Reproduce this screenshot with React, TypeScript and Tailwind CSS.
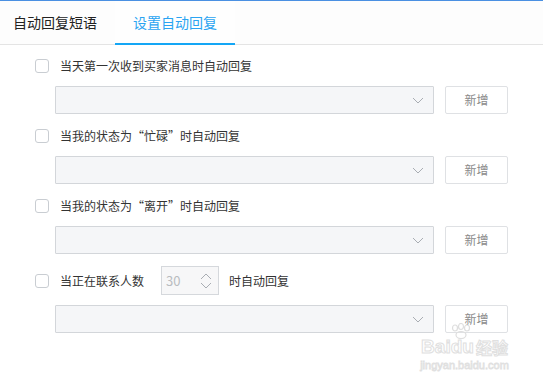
import React from "react";

const font = { fontFamily: '"Noto Sans CJK SC", "Noto Sans", sans-serif' };

function Checkbox() {
  return <div className="h-[14px] w-[14px] shrink-0 rounded-[3px] border border-[#c9cdd2] bg-white" />;
}

function Chevron() {
  return (
    <svg width="12" height="7" viewBox="0 0 12 7" className="shrink-0">
      <path d="M1 1 L6 6 L11 1" fill="none" stroke="#a9adb3" strokeWidth="1" />
    </svg>
  );
}

function SelectRow() {
  return (
    <div className="ml-[20px] mt-[10px] flex items-center">
      <div className="flex h-[28px] w-[379px] shrink-0 items-center justify-end rounded-[1px] border border-[#d3d6da] bg-[#f5f6f8] pr-[9px]">
        <Chevron />
      </div>
      <div className="ml-[11px] flex h-[28px] w-[63px] shrink-0 items-center justify-center rounded-[2px] border border-[#dfe1e4] bg-white text-[12px] text-[#8a8a8a]">
        新增
      </div>
    </div>
  );
}

function Block({ label }: { label: string }) {
  return (
    <div className="mb-[12px]">
      <div className="flex h-[20px] items-center">
        <Checkbox />
        <span className="ml-[11px] text-[12px] text-[#333]">{label}</span>
      </div>
      <SelectRow />
    </div>
  );
}

const stroke = (w: string) => ({ color: "transparent", WebkitTextStroke: `${w} #e0e0e0` });

export default function App() {
  return (
    <div className="relative h-[380px] w-[543px] overflow-hidden bg-white" style={font}>
      <div className="h-[1px] bg-[#4a90e2]" />
      <div className="flex h-[44px] border-b border-[#e4e4e4] bg-[#fdfdfd]">
        <div className="flex w-[115px] items-center pl-[13px] text-[14px] text-[#222]">自动回复短语</div>
        <div className="mb-[-1px] flex w-[120px] items-center justify-center border-b-2 border-[#14a6f5] bg-[#fefefe] text-[14px] text-[#2aa4f2]">
          设置自动回复
        </div>
      </div>
      <div className="pl-[35px] pt-[11px]">
        <Block label="当天第一次收到买家消息时自动回复" />
        <Block label="当我的状态为“忙碌”时自动回复" />
        <Block label="当我的状态为“离开”时自动回复" />
        <div>
          <div className="flex h-[29px] items-center">
            <Checkbox />
            <span className="ml-[11px] text-[12px] text-[#333]">当正在联系人数</span>
            <div className="ml-[17px] flex h-[29px] w-[58px] items-center justify-between border border-[#d5d8dc] bg-[#f7f7f8] pl-[4px] pr-[6px]">
              <span className="text-[13px] text-[#b9bcc0]">30</span>
              <svg width="12" height="18" viewBox="0 0 12 18">
                <path d="M1 7 L6 2 L11 7" fill="none" stroke="#a9adb3" strokeWidth="1" />
                <path d="M1 11 L6 16 L11 11" fill="none" stroke="#a9adb3" strokeWidth="1" />
              </svg>
            </div>
            <span className="ml-[10px] text-[12px] text-[#333]">时自动回复</span>
          </div>
          <div className="mt-[2px]">
            <SelectRow />
          </div>
        </div>
      </div>
      <svg width="28" height="16" viewBox="0 0 28 16" className="pointer-events-none absolute left-[447px] top-[323px]">
        <g fill="none" stroke="#dedede" strokeWidth="1.2">
          <ellipse cx="8" cy="5" rx="2.5" ry="3" />
          <ellipse cx="14" cy="3.5" rx="2.5" ry="3" />
          <ellipse cx="20" cy="5" rx="2.5" ry="3" />
          <ellipse cx="14" cy="12" rx="5" ry="3.5" />
        </g>
      </svg>
      <div className="pointer-events-none absolute left-[416px] top-[337px] flex w-[97px] flex-col items-center">
        <div className="flex h-[19px] items-center leading-none">
          <span className="text-[19px] font-bold" style={{ fontFamily: '"Liberation Sans", sans-serif', ...stroke("1px") }}>Baidu</span>
          <span className="ml-[2px] text-[16px] font-bold" style={stroke("1px")}>经验</span>
        </div>
        <span className="mt-[4px] text-[11px] leading-none" style={{ fontFamily: '"Liberation Sans", sans-serif', ...stroke("0.8px") }}>jingyan.baidu.com</span>
      </div>
    </div>
  );
}
